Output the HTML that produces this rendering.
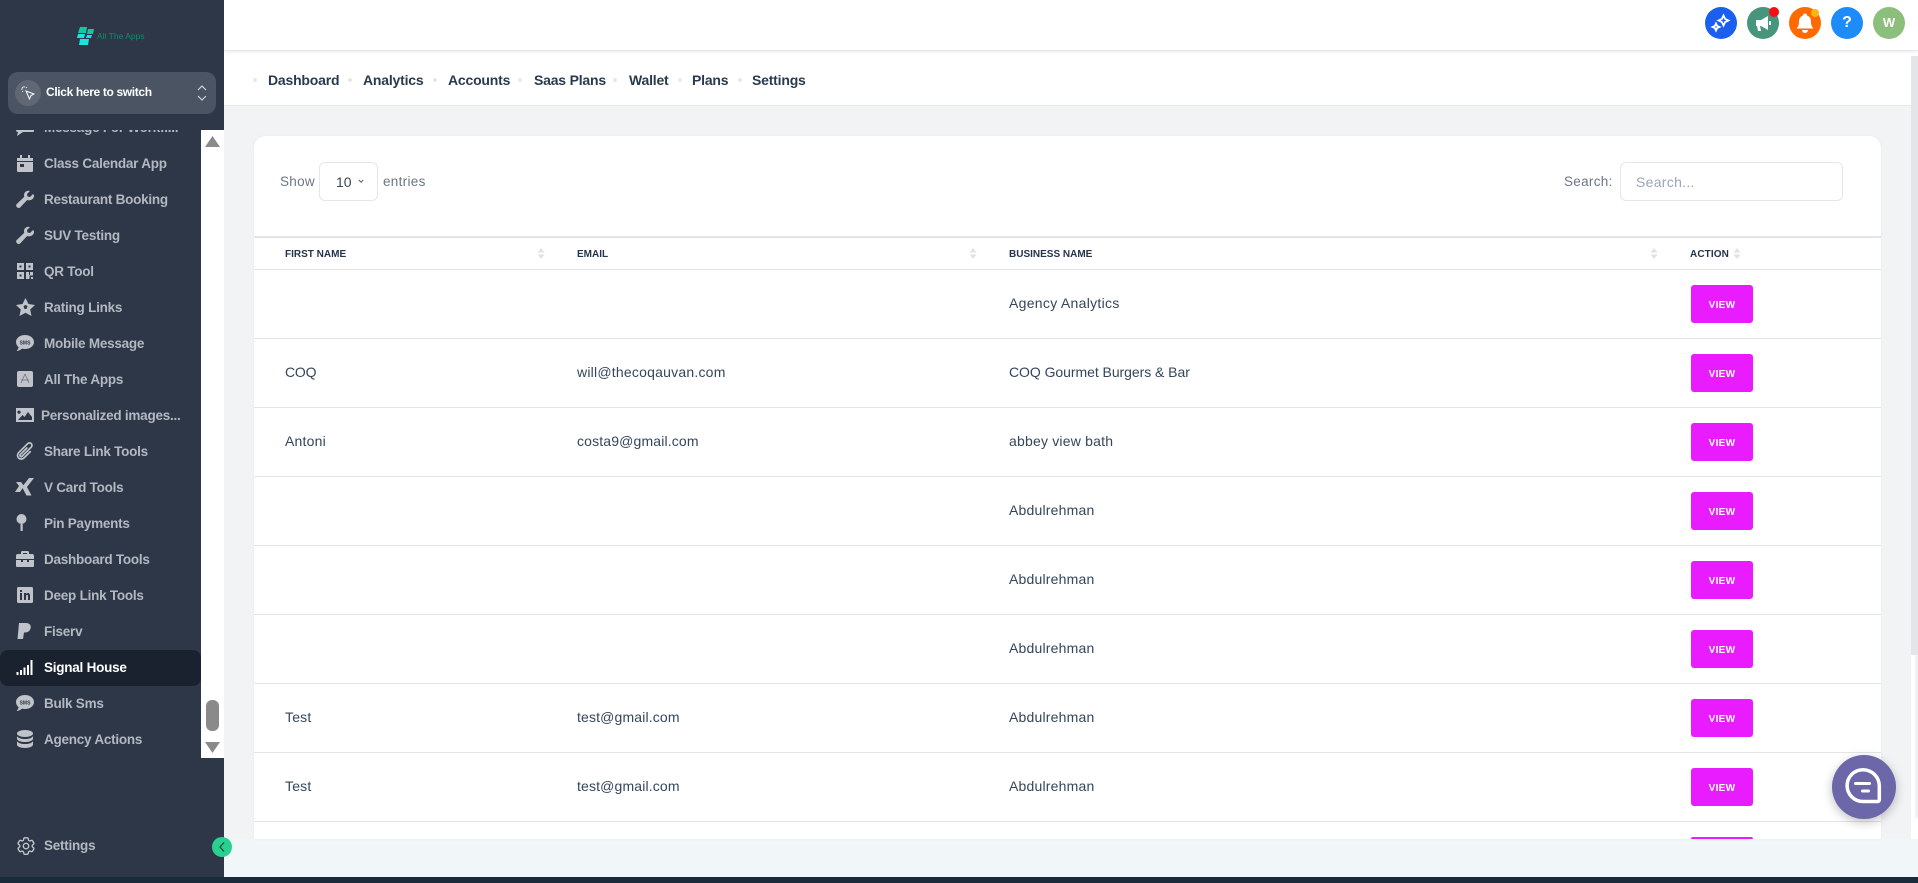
<!DOCTYPE html>
<html><head><meta charset="utf-8"><title>All The Apps</title>
<style>
*{box-sizing:border-box}
html,body{margin:0;padding:0;width:1918px;height:883px;overflow:hidden;background:#f1f6f8;font-family:"Liberation Sans",sans-serif}
.a{position:absolute;white-space:nowrap}
#side{position:absolute;left:0;top:0;width:224px;height:877px;background:#2d3748}
#bar{position:absolute;left:0;top:877px;width:1918px;height:6px;background:#1a2b3c}
.m{position:absolute;left:44px;margin-top:1px;font-size:13.5px;font-weight:700;color:#b4b8c0;line-height:18px;white-space:nowrap;letter-spacing:-.24px}
.i{position:absolute;left:15px;width:20px;height:20px;fill:#c0c3c9}
.nav{position:absolute;top:72px;font-size:14px;font-weight:700;color:#2a3a4e;line-height:16px;white-space:nowrap;letter-spacing:-.2px}
.dot{position:absolute;top:78px;width:4px;height:4px;border-radius:50%;background:#e6e8ec}
.c{position:absolute;width:32px;height:32px;border-radius:50%;top:7px}
.line{position:absolute;left:254px;width:1627px;height:1px;background:#e4e5ea}
.t{position:absolute;font-size:14px;color:#34465c;line-height:18px;white-space:nowrap;letter-spacing:.2px}
.th{position:absolute;top:248px;font-size:10px;font-weight:700;color:#24344a;line-height:14px;white-space:nowrap}
.btn{position:absolute;left:1691px;width:62px;height:38px;background:#e81cff;border-radius:3px;color:#fff;font-size:10px;font-weight:700;text-align:center;line-height:41px;letter-spacing:.3px}
.s{position:absolute;top:248px;width:8px;height:11px}
</style></head><body>

<div class="a" style="left:224px;top:51px;width:1694px;height:55px;background:#fff;border-bottom:1px solid #e6e7ec"></div>
<div class="a" style="left:224px;top:0;width:1694px;height:50px;background:#fff;box-shadow:0 2px 4px rgba(0,0,0,.08)"></div>
<div class="a" style="left:224px;top:106px;width:1694px;height:733px;background:#f2f3f5"></div>
<div class="a" style="left:1911px;top:56px;width:7px;height:783px;background:#fff"></div>
<div class="a" style="left:1915px;top:655px;width:3px;height:163px;background:#f1f1f3"></div>
<div class="a" style="left:1911px;top:56px;width:7px;height:599px;background:#e4e5e9"></div>

<!-- top icons -->
<div class="c" style="left:1705px;background:#1a5fee"><svg width="32" height="32" viewBox="0 0 32 32" fill="none" stroke="#fff" stroke-width="1.8"><path d="M18.500 8.500l1.600 3.400 3.400 1.600-3.400 1.600-1.600 3.400-1.600-3.400-3.400-1.600 3.400-1.600z"/><path d="M11 16.500l1.100 2.400 2.400 1.100-2.400 1.100-1.100 2.400-1.100-2.400-2.400-1.100 2.400-1.100z"/></svg></div>
<div class="c" style="left:1747px;background:#46957c"><svg width="32" height="32" viewBox="0 0 32 32" fill="#fff"><path d="M9 13h5l7-4v14l-7-4h-1l1 5h-3l-1-5H9z"/><rect x="22" y="14" width="2" height="4"/></svg></div>
<div class="a" style="left:1769px;top:7px;width:10px;height:10px;border-radius:50%;background:#f40f16"></div>
<div class="c" style="left:1789px;background:#ff6a00"><svg width="32" height="32" viewBox="0 0 32 32" fill="#fff"><path d="M16 6.500a2 2 0 0 1 2 2c3 1 4 3.500 4 6.500 0 3 1 5 2.500 6.500h-17C9 20 10 18 10 15c0-3 1-5.500 4-6.500a2 2 0 0 1 2-2z"/><path d="M13 23h6a3 3 0 0 1-6 0z"/></svg></div>
<div class="a" style="left:1811px;top:9px;width:8px;height:8px;border-radius:50%;background:#fdb515"></div>
<div class="c" style="left:1831px;background:#1d8cf8;color:#fff;font-weight:700;font-size:16px;text-align:center;line-height:32px">?</div>
<div class="c" style="left:1873px;background:#8cbf7b;color:#fff;font-weight:700;font-size:13px;text-align:center;line-height:32px">W</div>

<!-- nav -->
<div class="dot" style="left:253px"></div><div class="nav" style="left:268px">Dashboard</div>
<div class="dot" style="left:348px"></div><div class="nav" style="left:363px">Analytics</div>
<div class="dot" style="left:433px"></div><div class="nav" style="left:448px">Accounts</div>
<div class="dot" style="left:518px"></div><div class="nav" style="left:534px">Saas Plans</div>
<div class="dot" style="left:613px"></div><div class="nav" style="left:629px">Wallet</div>
<div class="dot" style="left:678px"></div><div class="nav" style="left:692px">Plans</div>
<div class="dot" style="left:738px"></div><div class="nav" style="left:752px">Settings</div>

<!-- card -->
<div class="a" style="left:254px;top:136px;width:1627px;height:703px;background:#fff;border-radius:12px 12px 0 0;box-shadow:0 0 3px rgba(0,0,0,.04)"></div>
<div class="t" style="left:280px;top:173px;color:#6b7686;font-size:13.5px;letter-spacing:.3px">Show</div>
<div class="a" style="left:319px;top:162px;width:59px;height:39px;border:1px solid #e4e6ea;border-radius:6px;background:#fff"></div>
<div class="t" style="left:336px;top:173px;color:#3a4656;letter-spacing:0">10</div>
<svg class="a" style="left:358px;top:179px" width="6" height="5" viewBox="0 0 6 5" fill="none" stroke="#556" stroke-width="1"><path d="M.8 1l2.200 2.200L5.200 1"/></svg>
<div class="t" style="left:383px;top:173px;color:#6b7686;font-size:13.5px;letter-spacing:.3px">entries</div>
<div class="t" style="left:1564px;top:173px;color:#6b7686;font-size:13.5px;letter-spacing:.3px">Search:</div>
<div class="a" style="left:1620px;top:162px;width:223px;height:39px;border:1px solid #e4e6ea;border-radius:6px;background:#fff"></div>
<div class="t" style="left:1636px;top:173px;color:#9aa5bb;letter-spacing:.3px">Search...</div>

<div class="line" style="top:236px;height:2px"></div>
<div class="line" style="top:269px"></div>
<div class="line" style="top:338px"></div>
<div class="line" style="top:407px"></div>
<div class="line" style="top:476px"></div>
<div class="line" style="top:545px"></div>
<div class="line" style="top:614px"></div>
<div class="line" style="top:683px"></div>
<div class="line" style="top:752px"></div>
<div class="line" style="top:821px"></div>

<div class="th" style="left:285px">FIRST NAME</div>
<div class="th" style="left:577px">EMAIL</div>
<div class="th" style="left:1009px">BUSINESS NAME</div>
<div class="th" style="left:1690px;letter-spacing:.1px">ACTION</div>
<svg class="s" style="left:537px" viewBox="0 0 8 11" fill="#e0e2e7"><path d="M4 0l3.500 4.500h-7zM4 11L.5 6.500h7z"/></svg>
<svg class="s" style="left:969px" viewBox="0 0 8 11" fill="#e0e2e7"><path d="M4 0l3.500 4.500h-7zM4 11L.5 6.500h7z"/></svg>
<svg class="s" style="left:1650px" viewBox="0 0 8 11" fill="#e0e2e7"><path d="M4 0l3.500 4.500h-7zM4 11L.5 6.500h7z"/></svg>
<svg class="s" style="left:1733px" viewBox="0 0 8 11" fill="#e0e2e7"><path d="M4 0l3.500 4.500h-7zM4 11L.5 6.500h7z"/></svg>

<div class="t" style="left:1009px;top:294px;letter-spacing:.3px">Agency Analytics</div>
<div class="t" style="left:285px;top:363px;letter-spacing:-.2px">COQ</div><div class="t" style="left:577px;top:363px;letter-spacing:.22px">will@thecoqauvan.com</div><div class="t" style="left:1009px;top:363px;letter-spacing:-.05px">COQ Gourmet Burgers &amp; Bar</div>
<div class="t" style="left:285px;top:432px">Antoni</div><div class="t" style="left:577px;top:432px;letter-spacing:.15px">costa9@gmail.com</div><div class="t" style="left:1009px;top:432px">abbey view bath</div>
<div class="t" style="left:1009px;top:501px">Abdulrehman</div>
<div class="t" style="left:1009px;top:570px">Abdulrehman</div>
<div class="t" style="left:1009px;top:639px">Abdulrehman</div>
<div class="t" style="left:285px;top:708px">Test</div><div class="t" style="left:577px;top:708px;letter-spacing:.15px">test@gmail.com</div><div class="t" style="left:1009px;top:708px">Abdulrehman</div>
<div class="t" style="left:285px;top:777px">Test</div><div class="t" style="left:577px;top:777px;letter-spacing:.15px">test@gmail.com</div><div class="t" style="left:1009px;top:777px">Abdulrehman</div>

<div class="btn" style="top:285px">VIEW</div>
<div class="btn" style="top:354px">VIEW</div>
<div class="btn" style="top:423px">VIEW</div>
<div class="btn" style="top:492px">VIEW</div>
<div class="btn" style="top:561px">VIEW</div>
<div class="btn" style="top:630px">VIEW</div>
<div class="btn" style="top:699px">VIEW</div>
<div class="btn" style="top:768px">VIEW</div>
<div class="a" style="left:1691px;top:837px;width:62px;height:2px;background:#e81cff;border-radius:2px 2px 0 0"></div>

<!-- chat -->
<div class="a" style="left:1832px;top:755px;width:64px;height:64px;border-radius:50%;background:#6b67a8;box-shadow:0 3px 10px rgba(0,0,0,.25)">
<svg width="64" height="64" viewBox="0 0 64 64" fill="none" stroke="#fff" stroke-linecap="round"><path d="M31 14.700a16.300 16.300 0 0 1 16.300 16.300v14a1.500 1.500 0 0 1-1.500 1.500H31a15.900 15.900 0 0 1 0-31.800z" stroke-width="3.500" stroke-linejoin="round"/><path d="M23.500 28.500H37.500" stroke-width="3"/><path d="M30.500 36H36.500" stroke-width="3"/></svg></div>

<!-- sidebar -->
<div id="side">
<svg class="a" style="left:77px;top:27px" width="17" height="18" viewBox="0 0 17 18"><path d="M3 0h7l-1 6H1zM11 2h6l-1 5h-6z" fill="#12c8a0"/><path d="M1 7h7l-1 4H0zM3 12h9l-1 6H2zM10 8h5l-1 3H9z" fill="#15e6e0"/></svg>
<div class="a" style="left:97px;top:31px;font-size:8.500px;color:#138a68;line-height:11px">All The Apps</div>

<div class="a" style="left:8px;top:72px;width:208px;height:42px;background:#4a5463;border-radius:10px"></div>
<div class="a" style="left:15px;top:80px;width:26px;height:26px;border-radius:50%;background:#5f6874"></div>
<svg class="a" style="left:21px;top:86px" width="14" height="14" viewBox="0 0 14 14" fill="none" stroke="#fff" stroke-width="1"><path d="M5 5l8 3-3 1.500L8.500 13z"/><path d="M3 0v2M0 3h2M1 1l1 1M6 1L5 2M1 6l1-1" stroke-width=".8"/></svg>
<div class="a" style="left:46px;top:84px;font-size:12px;font-weight:700;color:#fff;line-height:16px;letter-spacing:-.35px">Click here to switch</div>
<svg class="a" style="left:197px;top:85px" width="10" height="16" viewBox="0 0 10 16" fill="none" stroke="#cfd2d7" stroke-width="1.200"><path d="M1 5l4-4 4 4M1 11l4 4 4-4"/></svg>

<div class="a" style="left:201px;top:130px;width:23px;height:628px;background:#fff"></div>
<svg class="a" style="left:205px;top:136px" width="15" height="12" viewBox="0 0 15 12" fill="#8a8a8a"><path d="M7.500 0L15 11H0z"/></svg>
<div class="a" style="left:206px;top:700px;width:13px;height:31px;border-radius:6px;background:#8a8a8a"></div>
<svg class="a" style="left:205px;top:741px" width="15" height="12" viewBox="0 0 15 12" fill="#8a8a8a"><path d="M0 1h15L7.500 12z"/></svg>

<div class="a" style="left:0;top:130px;width:201px;height:628px;overflow:hidden">
 <div class="a" style="left:0;top:520px;width:201px;height:36px;background:#1a2230;border-radius:8px"></div>
 <svg class="i" style="top:-12px" viewBox="0 0 20 20"><path d="M2 4h16a1 1 0 0 1 1 1v8a1 1 0 0 1-1 1H8l-6 4 1-4a2 2 0 0 1-2-2V5a1 1 0 0 1 1-1z"/></svg>
 <div class="m" style="top:-12px">Message For Workfl...</div>
</div>

<svg class="i" style="top:153px" viewBox="0 0 20 20"><path d="M2 5h3V2h2v3h6V2h2v3h3v3H2zM2 9h16v9a1 1 0 0 1-1 1H3a1 1 0 0 1-1-1zm3 2v3h4v-3z"/></svg><div class="m" style="top:154px">Class Calendar App</div>
<svg class="i" style="top:189px" viewBox="0 0 20 20"><path d="M18 5l-3 3-2.500-.5L12 5l3-3c-3-1-6 1-6 4 0 .7.100 1.300.3 1.800L1.800 15a2 2 0 0 0 0 3l.4.400a2 2 0 0 0 3 0L12.200 11c3 1.200 6.800-1 6.800-4 0-.7-.4-1.500-1-2z"/></svg><div class="m" style="top:190px">Restaurant Booking</div>
<svg class="i" style="top:225px" viewBox="0 0 20 20"><path d="M18 5l-3 3-2.500-.5L12 5l3-3c-3-1-6 1-6 4 0 .7.100 1.300.3 1.800L1.800 15a2 2 0 0 0 0 3l.4.400a2 2 0 0 0 3 0L12.200 11c3 1.200 6.800-1 6.800-4 0-.7-.4-1.500-1-2z"/></svg><div class="m" style="top:226px">SUV Testing</div>
<svg class="i" style="top:261px" viewBox="0 0 20 20"><path fill-rule="evenodd" d="M2 2h7v7H2zm2.500 2.500v2h2v-2zM11 2h7v7h-7zm2.500 2.500v2h2v-2zM2 11h7v7H2zm2.500 2.500v2h2v-2zM11 11h3v3h1v-3h3v3.500h-3.500V18H11zM16 16h2v2h-2z"/></svg><div class="m" style="top:262px">QR Tool</div>
<svg class="i" style="top:297px" viewBox="0 0 20 20"><path fill-rule="evenodd" d="M10.500 1l3 6 6.500 1-4.800 4.500 1.300 6.500-6-3.200L4.500 19l1.300-6.500L1 8l6.500-1zM10.500 8l-2 1 1 3 2 0 1-3z"/></svg><div class="m" style="top:298px">Rating Links</div>
<svg class="i" style="top:333px" viewBox="0 0 20 20"><path d="M10 2c5 0 9 3 9 7s-4 7-9 7c-1 0-2-.1-3-.4C5.500 17 3 18 1.500 18c1-1 2-2.500 2-4C2 13 1 11 1 9c0-4 4-7 9-7z"/><text x="10" y="11.500" font-size="5" font-weight="700" text-anchor="middle" fill="#2d3748" font-family="Liberation Sans">SMS</text></svg><div class="m" style="top:334px">Mobile Message</div>
<svg class="i" style="top:369px" viewBox="0 0 20 20"><rect x="2" y="2" width="16" height="16" rx="2"/><path d="M10 5l-4 9M10 5l4 9M6 11h8" stroke="#2d3748" stroke-width=".7" fill="none" opacity=".6"/></svg><div class="m" style="top:370px">All The Apps</div>
<svg class="i" style="top:405px" viewBox="0 0 20 20"><path fill-rule="evenodd" d="M1 3h18v14H1zm3 2.500a1.700 1.700 0 1 0 .01 0zM3 15h14v-3l-4-5-3.500 5-2-2z"/></svg><div class="m" style="top:406px;left:41px">Personalized images...</div>
<svg class="i" style="top:441px;fill:none" viewBox="0 0 24 24" stroke="#c0c3c9" stroke-width="2" stroke-linecap="round" stroke-linejoin="round"><path d="m18.375 12.739-7.693 7.693a4.500 4.500 0 0 1-6.364-6.364l10.940-10.940A3 3 0 1 1 19.500 7.372L8.552 18.320m.009-.01-.01.01m5.699-9.941-7.810 7.810a1.500 1.500 0 0 0 2.112 2.130"/></svg><div class="m" style="top:442px">Share Link Tools</div>
<svg class="i" style="top:477px" viewBox="0 0 20 20"><path d="M14 1h5l-7 9 4.500 8.500h-5L7 10zM1 5h5l3 4-4 6H0l4-6z"/></svg><div class="m" style="top:478px">V Card Tools</div>
<svg class="i" style="top:513px" viewBox="0 0 20 20"><circle cx="6.500" cy="6" r="5"/><rect x="5.500" y="11" width="2.200" height="7"/></svg><div class="m" style="top:514px">Pin Payments</div>
<svg class="i" style="top:549px" viewBox="0 0 20 20"><path fill-rule="evenodd" d="M6 5V3.500A1.500 1.500 0 0 1 7.500 2h5A1.500 1.500 0 0 1 14 3.500V5h3a2 2 0 0 1 2 2v3H1V7a2 2 0 0 1 2-2zm2-1v1h4V4zM1 11h5v2h2v-2h4v2h2v-2h5v6a1 1 0 0 1-1 1H2a1 1 0 0 1-1-1z"/></svg><div class="m" style="top:550px">Dashboard Tools</div>
<svg class="i" style="top:585px" viewBox="0 0 20 20"><rect x="2" y="2" width="16" height="16" rx="1.500"/><path d="M5 8h2v7H5zM5 5h2v2H5zM9 8h2v1c1-1.500 4-1.500 4 1.500V15h-2v-4c0-1.500-2-1.500-2 0v4H9z" fill="#2d3748"/></svg><div class="m" style="top:586px">Deep Link Tools</div>
<svg class="i" style="top:621px" viewBox="0 0 20 20"><path d="M4 2h7c4 0 5.500 3 4.500 5.500C14.500 11 12 11.500 9 11.500L8 18H2.500z"/></svg><div class="m" style="top:622px">Fiserv</div>
<svg class="i" style="top:657px;fill:#fff" viewBox="0 0 20 20"><rect x="1.500" y="15" width="2" height="3"/><rect x="5" y="13" width="2" height="5"/><rect x="8.500" y="10.500" width="2" height="7.500"/><rect x="12" y="8" width="2" height="10"/><rect x="15.500" y="3" width="2" height="15"/></svg><div class="m" style="top:658px;color:#fff">Signal House</div>
<svg class="i" style="top:693px" viewBox="0 0 20 20"><path d="M10 2c5 0 9 3 9 7s-4 7-9 7c-1 0-2-.1-3-.4C5.500 17 3 18 1.500 18c1-1 2-2.500 2-4C2 13 1 11 1 9c0-4 4-7 9-7z"/><text x="10" y="11.500" font-size="5" font-weight="700" text-anchor="middle" fill="#2d3748" font-family="Liberation Sans">SMS</text></svg><div class="m" style="top:694px">Bulk Sms</div>
<svg class="i" style="top:729px" viewBox="0 0 20 20"><ellipse cx="10" cy="4.500" rx="8" ry="3.500"/><path d="M2 7c1 2 4 3 8 3s7-1 8-3v3c-1 2-4 3-8 3s-7-1-8-3zM2 12c1 2 4 3 8 3s7-1 8-3v3.500c0 2-3.500 3.500-8 3.500s-8-1.500-8-3.500z"/></svg><div class="m" style="top:730px">Agency Actions</div>

<svg class="i" style="top:835px;left:15px;width:22px;height:22px;fill:none" viewBox="0 0 24 24" stroke="#c0c3c9" stroke-width="1.500" stroke-linejoin="round"><path d="M9.594 3.940c.09-.542.56-.94 1.110-.94h2.593c.55 0 1.020.398 1.110.94l.213 1.281c.063.374.313.686.645.87.074.04.147.083.22.127.325.196.72.257 1.075.124l1.217-.456a1.125 1.125 0 0 1 1.370.49l1.296 2.247a1.125 1.125 0 0 1-.26 1.431l-1.003.827c-.293.241-.438.613-.43.992a7.723 7.723 0 0 1 0 .255c-.008.378.137.75.43.991l1.004.827c.424.35.534.955.26 1.430l-1.298 2.247a1.125 1.125 0 0 1-1.369.491l-1.217-.456c-.355-.133-.75-.072-1.076.124a6.470 6.470 0 0 1-.22.128c-.331.183-.581.495-.644.869l-.213 1.281c-.09.543-.56.94-1.110.94h-2.594c-.55 0-1.019-.398-1.110-.94l-.213-1.281c-.062-.374-.312-.686-.644-.87a6.520 6.520 0 0 1-.22-.127c-.325-.196-.72-.257-1.076-.124l-1.217.456a1.125 1.125 0 0 1-1.369-.49l-1.297-2.247a1.125 1.125 0 0 1 .26-1.431l1.004-.827c.292-.24.437-.613.43-.991a6.932 6.932 0 0 1 0-.255c.007-.38-.138-.751-.43-.992l-1.004-.827a1.125 1.125 0 0 1-.26-1.430l1.297-2.247a1.125 1.125 0 0 1 1.370-.491l1.216.456c.356.133.751.072 1.076-.124.072-.044.146-.086.22-.128.332-.183.582-.495.644-.869l.214-1.280Z"/><circle cx="12" cy="12" r="3"/></svg>
<div class="m" style="top:836px">Settings</div>
</div>

<div class="a" style="left:212px;top:837px;width:20px;height:20px;border-radius:50%;background:#2ad08f"><svg width="20" height="20" viewBox="0 0 20 20" fill="none" stroke="#15503c" stroke-width="1.300"><path d="M12 5.500L8 10l4 4.500"/></svg></div>

<div id="bar"></div>
</body></html>
